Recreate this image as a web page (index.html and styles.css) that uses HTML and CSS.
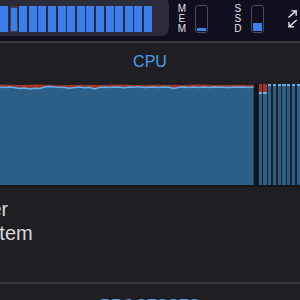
FILE: index.html
```html
<!DOCTYPE html>
<html lang="en">
<head>
    <meta charset="UTF-8">
    <meta name="viewport" content="width=device-width, initial-scale=1.0">
    <title>System Monitor</title>
    <link rel="stylesheet" href="styles.css">
</head>
<body>
    <header class="topbar">
        <div class="cores">
            <span class="core"></span>
            <span class="core active"></span>
            <span class="core"></span>
            <span class="core"></span>
            <span class="core"></span>
            <span class="core"></span>
            <span class="core"></span>
            <span class="core"></span>
            <span class="core"></span>
            <span class="core"></span>
            <span class="core"></span>
            <span class="core"></span>
            <span class="core"></span>
            <span class="core"></span>
            <span class="core"></span>
            <span class="core"></span>
        </div>

        <div class="meter">
            <div class="meter-label"><span>M</span><span>E</span><span>M</span></div>
            <div class="gauge"><div class="gauge-fill" style="height: 3px"></div></div>
        </div>

        <div class="meter meter-ssd">
            <div class="meter-label"><span>S</span><span>S</span><span>D</span></div>
            <div class="gauge"><div class="gauge-fill" style="height: 8px"></div></div>
        </div>

        <!-- expand / detach -->
        <svg class="expand" width="10" height="18" viewBox="0 0 10 18">
            <path d="M1 7 L8.2 0.9 M4 0.9 H8.2 V5" />
            <path d="M8.2 10.5 L1 16.8 M1 12.6 V16.8 H5.2" />
        </svg>
    </header>

    <section class="section">
        <h2 class="section-title">CPU</h2>

        <div class="chart">
            <svg class="chart-area" viewBox="0 0 255 101" preserveAspectRatio="none">
                <path class="area-system" d="M0 0.6 L20 1 L40 0.5 L60 1.2 L80 0.8 L100 1 L120 0.6 L140 1.1 L160 0.7 L180 1 L200 0.6 L220 1.1 L240 0.7 L255 1 L255 3 L250 3.4 L245 3 L240 3.3 L235 3 L230 3.6 L225 3.2 L220 3.3 L215 3 L210 3.6 L205 3.1 L200 3.4 L195 3 L190 3.5 L185 3 L180 3.3 L175 4.5 L170 3.3 L165 3 L160 3.6 L155 3 L150 3.2 L145 3.5 L140 2.8 L135 3.3 L130 3 L125 3.8 L120 3.2 L115 3 L110 3.6 L105 3 L100 3.5 L95 5 L90 3.2 L85 3.8 L80 3 L75 3.5 L70 4.2 L65 3.5 L60 3.2 L55 3 L50 2.5 L45 3 L40 4.5 L35 4.2 L30 5 L25 4 L20 4.5 L15 3.8 L10 3 L5 3.5 L0 3 Z" />
                <path class="area-user" d="M0 3 L5 3.5 L10 3 L15 3.8 L20 4.5 L25 4 L30 5 L35 4.2 L40 4.5 L45 3 L50 2.5 L55 3 L60 3.2 L65 3.5 L70 4.2 L75 3.5 L80 3 L85 3.8 L90 3.2 L95 5 L100 3.5 L105 3 L110 3.6 L115 3 L120 3.2 L125 3.8 L130 3 L135 3.3 L140 2.8 L145 3.5 L150 3.2 L155 3 L160 3.6 L165 3 L170 3.3 L175 4.5 L180 3.3 L185 3 L190 3.5 L195 3 L200 3.4 L205 3.1 L210 3.6 L215 3 L220 3.3 L225 3.2 L230 3.6 L235 3 L240 3.3 L245 3 L250 3.4 L255 3 L255 101 L0 101 Z" />
                <path class="area-line" d="M0 3 L5 3.5 L10 3 L15 3.8 L20 4.5 L25 4 L30 5 L35 4.2 L40 4.5 L45 3 L50 2.5 L55 3 L60 3.2 L65 3.5 L70 4.2 L75 3.5 L80 3 L85 3.8 L90 3.2 L95 5 L100 3.5 L105 3 L110 3.6 L115 3 L120 3.2 L125 3.8 L130 3 L135 3.3 L140 2.8 L145 3.5 L150 3.2 L155 3 L160 3.6 L165 3 L170 3.3 L175 4.5 L180 3.3 L185 3 L190 3.5 L195 3 L200 3.4 L205 3.1 L210 3.6 L215 3 L220 3.3 L225 3.2 L230 3.6 L235 3 L240 3.3 L245 3 L250 3.4 L255 3" />
            </svg>
            <div class="chart-divider"></div>
            <div class="history">
                <span class="bar hot"></span>
                <span class="bar hot"></span>
                <span class="bar"></span>
                <span class="bar"></span>
                <span class="bar"></span>
                <span class="bar"></span>
                <span class="bar"></span>
                <span class="bar"></span>
                <span class="bar"></span>
            </div>
        </div>

        <ul class="legend">
            <li>User</li>
            <li>System</li>
        </ul>
    </section>

    <section class="section">
        <h2 class="section-title">PROCESSES</h2>
    </section>
</body>
</html>
```

FILE: styles.css
```css
body {
    margin: 0;
    width: 300px;
    height: 300px;
    overflow: hidden;
    background-color: #1f1f23;
    font-family: "Liberation Sans", Arial, sans-serif;
    color: #d9d9d9;
}
.topbar {
    display: flex;
    align-items: flex-start;
    height: 41px;
    background-color: #100f1f;
    border-bottom: 2px solid #38383c;
}
.cores {
    display: flex;
    gap: 1.6px;
    box-sizing: border-box;
    height: 39px;
    margin: -3px 0 0 -8px;
    padding: 9px 17px 0 8px;
    background-color: #2b2a3a;
    border-radius: 8px;
}
.core {
    width: 8px;
    height: 26px;
    background-color: #3b7eec;
}
.core.active {
    box-sizing: border-box;
    border: 1px solid #3a3c54;
    border-top-width: 2px;
}
.meter {
    display: flex;
    align-items: flex-start;
    margin-left: 8px;
}
.meter-ssd {
    margin-left: 25px;
}
.meter-label {
    display: flex;
    flex-direction: column;
    width: 10px;
    margin-top: 4px;
    font-size: 10px;
    line-height: 10px;
    text-align: center;
    color: #e2e2e2;
}
.gauge {
    display: flex;
    flex-direction: column;
    justify-content: flex-end;
    box-sizing: border-box;
    width: 13px;
    height: 28px;
    margin: 5px 0 0 8px;
    padding: 1px;
    border: 1px solid #4c4c59;
    border-radius: 3px;
}
.gauge-fill {
    background-color: #3b82f0;
}
.expand {
    margin: 10px 0 0 24px;
    fill: none;
    stroke: #e4e4e4;
    stroke-width: 1.4;
    stroke-linecap: square;
}
.section {
    border-top: 2px solid #38383c;
}
.topbar + .section {
    border-top: none;
}
.section-title {
    margin: 9px 0 0;
    height: 20px;
    font-size: 16px;
    font-weight: normal;
    line-height: 20px;
    text-align: center;
    color: #4d9de8;
}
.section + .section .section-title {
    margin-top: 12px;
}
.chart {
    display: flex;
    height: 101px;
    margin-top: 12px;
    border-bottom: 2px solid #151518;
}
.chart-area {
    width: 255px;
    height: 101px;
}
.area-system {
    fill: #a3352c;
}
.area-user {
    fill: #2c5f87;
}
.area-line {
    fill: none;
    stroke: #62b0ec;
    stroke-width: 1.5;
}
.chart-divider {
    width: 4px;
    background-color: #151518;
}
.history {
    display: flex;
    gap: 1.6px;
    padding-left: 1px;
}
.bar {
    width: 3.2px;
    background-color: #2c5f87;
    border-top: 2px solid #62b0ec;
}
.bar.hot {
    border-top: 8px solid #a3352c;
    box-shadow: inset 0 2px #62b0ec;
}
.legend {
    list-style-type: none;
    margin: 10px 0 37px -34px;
    padding: 0;
    font-size: 20px;
    line-height: 24px;
}
```
